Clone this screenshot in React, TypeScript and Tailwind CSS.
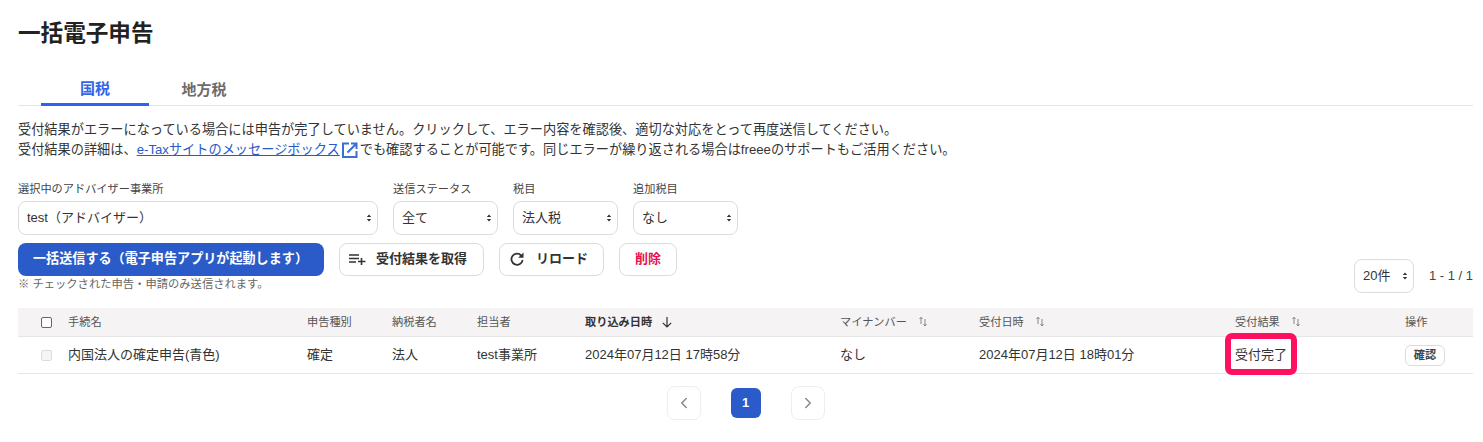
import React from "react";
import { ChevronLeft, ChevronRight } from "lucide-react";

const ff = { fontFamily: '"Liberation Sans","Noto Sans CJK JP",sans-serif' };

function SelectArrows() {
  return (
    <svg className="pointer-events-none absolute right-[3px] top-1/2 -translate-y-1/2" width="8" height="10" viewBox="0 0 8 10">
      <path d="M4 1.500 L6.200 4 H1.800 Z M4 8.500 L6.200 6 H1.800 Z" fill="#333" />
    </svg>
  );
}

function Sel({ value, w, label }: { value: string; w: string; label?: string }) {
  return (
    <div className={`flex flex-col ${w}`}>
      {label && <label className="text-[11.2px] leading-[14px] text-[#444] mb-[5px]">{label}</label>}
      <div className="relative">
        <select
          defaultValue={value}
          className="block h-[34px] w-full appearance-none rounded-lg border border-[#dcdcdc] bg-white pl-2 pr-4 text-[13px] text-[#333] outline-none"
        >
          <option>{value}</option>
        </select>
        <span className="pointer-events-none absolute inset-y-0 right-[2px] w-[10px]"><SelectArrows /></span>
      </div>
    </div>
  );
}

function Sort() {
  return (
    <svg width="10" height="11" viewBox="0 0 10 11" className="ml-[11px]" fill="none" stroke="#888" strokeWidth="1">
      <path d="M3 8V1.500M1.500 3 3 1.200 4.500 3" />
      <path d="M7 3v7M5.500 8 7 10 8.500 8" />
    </svg>
  );
}

const cols = "grid grid-cols-[50px_239px_85px_85px_108px_255px_139px_256px_170px_68px]";

export default function App() {
  return (
    <div style={ff} className="h-[442px] w-[1483px] overflow-hidden bg-white pl-[18px] pr-[10px] text-[#333]">
      <h1 className="pt-[20px] text-[22.6px] leading-[27px] font-bold text-[#222]">一括電子申告</h1>

      <div className="mt-[27px] flex h-[32px] border-b border-[#e5e5e5] pl-[23px]">
        <div className="flex h-[32px] w-[108px] items-center justify-center border-b-[3px] border-[#2864f0] pt-[1px] text-[15px] font-bold text-[#3366e6]">国税</div>
        <div className="flex h-[32px] w-[110px] items-center justify-center pt-[1px] text-[15px] font-bold text-[#6e6b6b]">地方税</div>
      </div>

      <div className="mt-[14px] text-[13.2px] leading-[20px] text-[#333]">
        <p>受付結果がエラーになっている場合には申告が完了していません。クリックして、エラー内容を確認後、適切な対応をとって再度送信してください。</p>
        <p className="flex items-center">
          受付結果の詳細は、
          <a className="text-[#285ac8] underline">e-Taxサイトのメッセージボックス</a>
          <svg width="18" height="18" viewBox="0 0 18 18" fill="none" stroke="#3b6fd4" strokeWidth="2" className="mx-[1px]">
            <path d="M8 2.500H2V16H15.500V10" />
            <path d="M6.500 11.500 15 3M10 2.500h5.500V8" />
          </svg>
          でも確認することが可能です。同じエラーが繰り返される場合はfreeeのサポートもご活用ください。
        </p>
      </div>

      <div className="mt-[22px] flex gap-[15px]">
        <Sel label="選択中のアドバイザー事業所" value="test（アドバイザー）" w="w-[360px]" />
        <Sel label="送信ステータス" value="全て" w="w-[105px]" />
        <Sel label="税目" value="法人税" w="w-[105px]" />
        <Sel label="追加税目" value="なし" w="w-[105px]" />
      </div>

      <div className="relative mt-[8px] h-[65px]">
        <div className="flex gap-[15px]">
          <button className="flex h-[33px] w-[306px] items-center justify-center rounded-lg bg-[#2a5bc8] pb-[2px] pr-[1px] text-[13.1px] font-bold text-white">一括送信する（電子申告アプリが起動します）</button>
          <button className="flex h-[33px] w-[145px] items-center justify-center gap-[10px] rounded-lg border border-[#dcdcdc] bg-white pb-[1px] pr-[7px] text-[13px] font-bold text-[#333]">
            <svg width="17" height="12" viewBox="0 0 17 12" fill="none" stroke="#333" strokeWidth="1.600">
              <path d="M0 2h10M0 5.500h10M0 9h7M12.500 5v7M9 8.500h7.500" />
            </svg>
            受付結果を取得
          </button>
          <button className="flex h-[33px] w-[105px] items-center justify-center gap-[12px] rounded-lg border border-[#dcdcdc] bg-white pb-[1px] pr-[5px] text-[13px] font-bold text-[#333]">
            <svg width="14" height="14" viewBox="0 0 14 14" fill="none" stroke="#333" strokeWidth="1.800">
              <path d="M11.300 3.600A5.600 5.600 0 1 0 12.600 8" />
              <path d="M13.500 0.500v5.300H8.200Z" fill="#333" stroke="none" />
            </svg>
            リロード
          </button>
          <button className="flex h-[33px] w-[58px] items-center justify-center rounded-lg border border-[#dcdcdc] bg-white pb-[1px] text-[13px] font-bold text-[#e8104f]">削除</button>
        </div>
        <p className="mt-[1px] text-[11.3px] leading-[14px] text-[#666]">※ チェックされた申告・申請のみ送信されます。</p>
        <div className="absolute right-0 top-[16px] flex items-center gap-[15px]">
          <Sel value="20件" w="w-[60px]" />
          <span className="text-[13px] text-[#444]">1 - 1 / 1</span>
        </div>
      </div>

      <div className="relative">
        <div className={`${cols} h-[29px] items-center border-b border-[#e5e5e5] bg-[#f5f3f4] text-[11.2px] text-[#555]`}>
          <div className="pl-[23px]"><span className="block h-[11px] w-[11px] rounded-[2px] border border-[#666] bg-white" /></div>
          <div>手続名</div>
          <div>申告種別</div>
          <div>納税者名</div>
          <div>担当者</div>
          <div className="flex items-center font-bold text-[#333]">取り込み日時
            <svg width="12" height="12" viewBox="0 0 12 12" fill="none" stroke="#333" strokeWidth="1.200" className="ml-[9px]"><path d="M6 1v10M1.800 6.800 6 11l4.200-4.200" /></svg>
          </div>
          <div className="flex items-center">マイナンバー<Sort /></div>
          <div className="flex items-center">受付日時<Sort /></div>
          <div className="flex items-center">受付結果<Sort /></div>
          <div>操作</div>
        </div>
        <div className={`${cols} h-[37px] items-center border-b border-[#e5e5e5] text-[13px] text-[#333]`}>
          <div className="pl-[23px]"><span className="block h-[11px] w-[11px] rounded-[2px] border border-[#dcdcdc] bg-[#f5f5f5]" /></div>
          <div>内国法人の確定申告(青色)</div>
          <div>確定</div>
          <div>法人</div>
          <div>test事業所</div>
          <div>2024年07月12日 17時58分</div>
          <div>なし</div>
          <div>2024年07月12日 18時01分</div>
          <div>受付完了</div>
          <div>
            <span className="flex h-[21px] w-[40px] items-center justify-center rounded-md border border-[#dcdcdc] text-[11.2px] font-bold text-[#444]">確認</span>
          </div>
        </div>
        <div className="absolute left-[1207px] top-[25px] h-[42px] w-[72px] rounded-[7px] border-[6px] border-[#ff0f5f]" />
      </div>

      <div className="mt-[12px] flex items-center justify-center">
        <span className="flex h-[34px] w-[34px] items-center justify-center rounded-lg border border-[#eeeeee] text-[#888]"><ChevronLeft size={18} strokeWidth={2} /></span>
        <span className="ml-[30px] flex h-[30px] w-[30px] items-center justify-center rounded-md bg-[#2a5bc8] text-[13px] font-bold text-white">1</span>
        <span className="ml-[30px] flex h-[34px] w-[34px] items-center justify-center rounded-lg border border-[#eeeeee] text-[#888]"><ChevronRight size={18} strokeWidth={2} /></span>
      </div>
    </div>
  );
}
